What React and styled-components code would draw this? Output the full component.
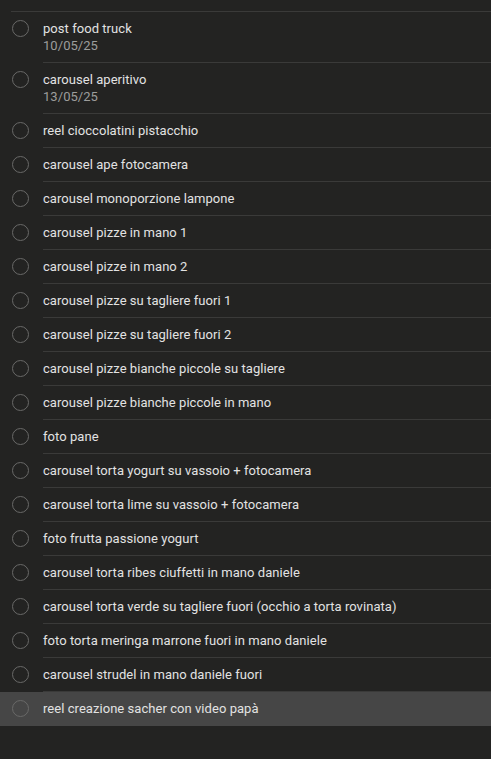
import React from 'react';
import styled, { createGlobalStyle } from 'styled-components';

const GlobalStyle = createGlobalStyle`
  html, body {
    margin: 0;
    padding: 0;
    background: #232322;
  }
  body {
    font-family: Roboto, "Noto Sans", "Liberation Sans", sans-serif;
    -webkit-font-smoothing: antialiased;
  }
`;

const reminders = [
  { title: 'post food truck', date: '10/05/25' },
  { title: 'carousel aperitivo', date: '13/05/25' },
  { title: 'reel cioccolatini pistacchio' },
  { title: 'carousel ape fotocamera' },
  { title: 'carousel monoporzione lampone' },
  { title: 'carousel pizze in mano 1' },
  { title: 'carousel pizze in mano 2' },
  { title: 'carousel pizze su tagliere fuori 1' },
  { title: 'carousel pizze su tagliere fuori 2' },
  { title: 'carousel pizze bianche piccole su tagliere' },
  { title: 'carousel pizze bianche piccole in mano' },
  { title: 'foto pane' },
  { title: 'carousel torta yogurt su vassoio + fotocamera' },
  { title: 'carousel torta lime su vassoio + fotocamera' },
  { title: 'foto frutta passione yogurt' },
  { title: 'carousel torta ribes ciuffetti in mano daniele' },
  { title: 'carousel torta verde su tagliere fuori (occhio a torta rovinata)' },
  { title: 'foto torta meringa marrone fuori in mano daniele' },
  { title: 'carousel strudel in mano daniele fuori' },
  { title: 'reel creazione sacher con video papà', selected: true },
];

const App = () => (
  <>
    <GlobalStyle />
    <List>
      <TopStrip />
      {reminders.map((r, i) => (
        <Row key={i} selected={r.selected}>
          <CheckCell>
            <Circle />
          </CheckCell>
          <Body last={i === reminders.length - 1}>
            <Title>{r.title}</Title>
            {r.date && <DateText>{r.date}</DateText>}
          </Body>
        </Row>
      ))}
    </List>
  </>
);

const List = styled.div`
  width: 100%;
  min-height: 759px;
  background: #232322;
`;

const TopStrip = styled.div`
  height: 11px;
  margin-left: 11px;
  border-bottom: 1px solid #3a3a39;
`;

const Row = styled.div`
  display: flex;
  align-items: flex-start;
  background: ${({ selected }) => (selected ? '#464646' : 'transparent')};
`;

const CheckCell = styled.div`
  width: 43px;
  flex-shrink: 0;
  box-sizing: border-box;
  padding: 8px 0 0 12px;
`;

const Circle = styled.div`
  width: 17px;
  height: 17px;
  box-sizing: border-box;
  border-radius: 50%;
  border: 1px solid #696968;
`;

const Body = styled.div`
  flex: 1;
  padding: 8px 0;
  border-bottom: 1px solid ${({ last }) => (last ? 'transparent' : '#3a3a39')};
`;

const Title = styled.div`
  font-size: 13px;
  line-height: 17px;
  letter-spacing: 0.05px;
  color: #e2e2e2;
`;

const DateText = styled.div`
  font-size: 13px;
  line-height: 17px;
  letter-spacing: 0.05px;
  color: #9d9d9c;
`;

export default App;
